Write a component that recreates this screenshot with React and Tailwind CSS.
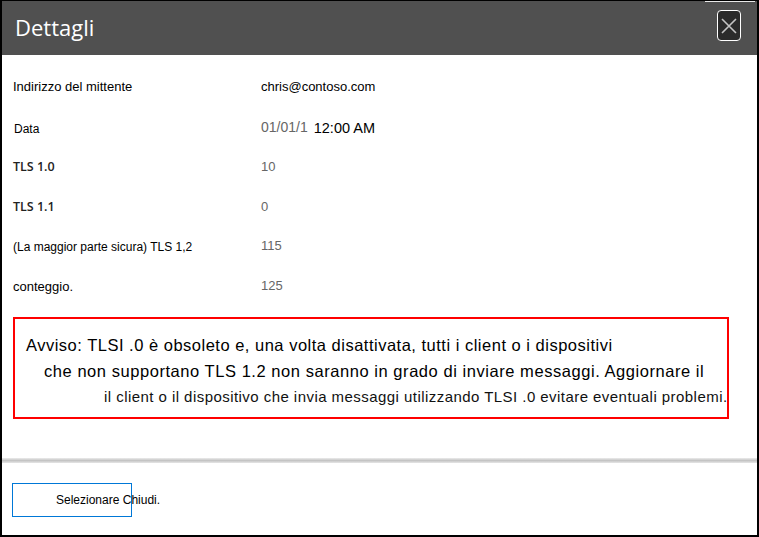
export default function App() {
  const label = "font-['Liberation_Sans',Arial,sans-serif] text-black";
  return (
    <div className="w-[759px] h-[537px] bg-white border-t border-l-2 border-r-2 border-b-2 border-black flex flex-col relative overflow-hidden">
      <div className="h-[54px] bg-[#505050] flex items-center justify-between pl-[13px] pr-[16px] relative shrink-0">
        <span className="font-['Open_Sans',sans-serif] text-[22px] leading-none text-white mt-[-2px]">Dettagli</span>
        <div className="w-[24px] h-[31px] rounded-[4px] border-[1.5px] border-white bg-[#2b2b2b] flex items-center justify-center mt-[-5px]">
          <svg width="16" height="16" viewBox="0 0 16 16">
            <path d="M1 1 L15 15 M15 1 L1 15" stroke="#c4c4c4" strokeWidth="1.6" fill="none" />
          </svg>
        </div>
        <div className="absolute top-0 right-[2px] w-[50px] h-[1px] bg-[#e8e8e8]" />
      </div>

      <div className="flex flex-col pt-[12px] pl-[11px]">
        <div className="h-10 flex items-center">
          <span className={`${label} w-[248px] text-[13px]`}>Indirizzo del mittente</span>
          <span className={`${label} text-[13px] text-[#222]`}>chris@contoso.com</span>
        </div>
        <div className="h-10 flex items-center pt-[3px]">
          <span className={`${label} w-[248px] text-[12px] pl-px`}>Data</span>
          <span className="font-['Liberation_Sans',Arial,sans-serif] text-[14px] text-[#666] mt-[-3px]">01/01/1</span>
          <span className={`${label} text-[14.5px] ml-[6px]`}>12:00 AM</span>
        </div>
        <div className="h-10 flex items-center">
          <span className="font-['Open_Sans',sans-serif] w-[248px] text-[12.5px] font-semibold text-[#222]">TLS 1.0</span>
          <span className="font-['Liberation_Sans',Arial,sans-serif] text-[13px] text-[#666]">10</span>
        </div>
        <div className="h-10 flex items-center">
          <span className="font-['Open_Sans',sans-serif] w-[248px] text-[12.5px] font-semibold text-[#222]">TLS 1.1</span>
          <span className="font-['Liberation_Sans',Arial,sans-serif] text-[13px] text-[#666]">0</span>
        </div>
        <div className="h-10 flex items-center">
          <span className={`${label} w-[248px] text-[12px]`}>(La maggior parte sicura) TLS 1,2</span>
          <span className="font-['Liberation_Sans',Arial,sans-serif] text-[13px] text-[#666] mt-[-3px]">115</span>
        </div>
        <div className="h-10 flex items-center">
          <span className={`${label} w-[248px] text-[13px]`}>conteggio.</span>
          <span className="font-['Liberation_Sans',Arial,sans-serif] text-[13px] text-[#666] mt-[-3px]">125</span>
        </div>
      </div>

      <div className="ml-[11px] mt-[10px] w-[716px] h-[102px] border-2 border-[#ff0000] flex flex-col pt-[13px] font-['Liberation_Sans',Arial,sans-serif] text-black">
        <div className="pl-[11px] text-[16.5px] tracking-[0.5px] leading-[26px] whitespace-nowrap">Avviso: TLSI .0 è obsoleto e, una volta disattivata, tutti i client o i dispositivi</div>
        <div className="pl-[29px] text-[16.5px] tracking-[0.55px] leading-[26px] whitespace-nowrap">che non supportano TLS 1.2 non saranno in grado di inviare messaggi. Aggiornare il</div>
        <div className="pl-[89px] text-[15px] tracking-[0.45px] leading-[26px] whitespace-nowrap text-[#111]">il client o il dispositivo che invia messaggi utilizzando TLSI .0 evitare eventuali problemi.</div>
      </div>

      <div className="mt-[39px] h-[5px] bg-gradient-to-b from-[#ececec] via-[#c4c4c4] to-[#e6e6e6]" />

      <div className="mt-[20px] ml-[10px] w-[120px] h-[34px] border border-[#0078d7] flex items-center pl-[43px] overflow-visible">
        <span className="font-['Liberation_Sans',Arial,sans-serif] text-[12px] text-black whitespace-nowrap">Selezionare Chiudi.</span>
      </div>
    </div>
  );
}
